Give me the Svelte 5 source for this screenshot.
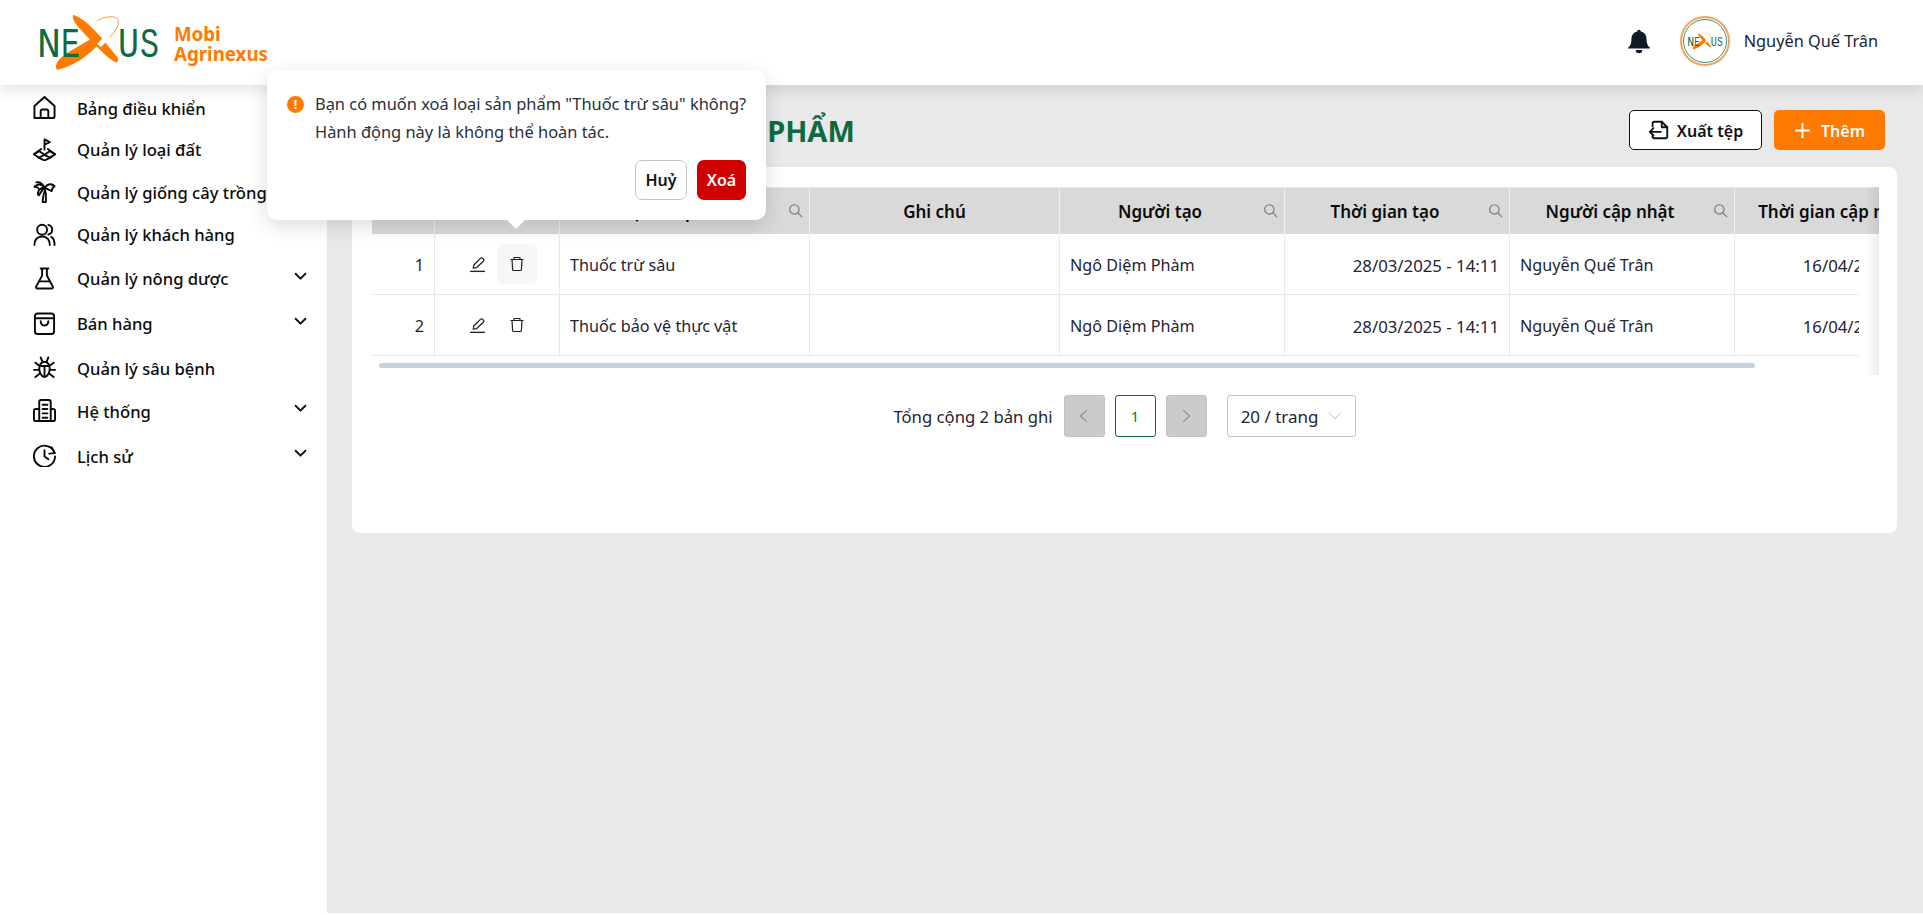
<script>
  const menu = [
    { label: 'Bảng điều khiển', icon: 'home' },
    { label: 'Quản lý loại đất', icon: 'land' },
    { label: 'Quản lý giống cây trồng', icon: 'palm' },
    { label: 'Quản lý khách hàng', icon: 'users' },
    { label: 'Quản lý nông dược', icon: 'flask', more: true },
    { label: 'Bán hàng', icon: 'bag', more: true },
    { label: 'Quản lý sâu bệnh', icon: 'bug' },
    { label: 'Hệ thống', icon: 'building', more: true },
    { label: 'Lịch sử', icon: 'clock', more: true }
  ];
  const cols = [
    { t: '', w: 63 },
    { t: '', w: 125 },
    { t: 'Loại sản phẩm', w: 250, s: true },
    { t: 'Ghi chú', w: 250 },
    { t: 'Người tạo', w: 225, s: true },
    { t: 'Thời gian tạo', w: 225, s: true },
    { t: 'Người cập nhật', w: 225, s: true },
    { t: 'Thời gian cập nhật', w: 225, s: true }
  ];
  const rows = [
    { n: 1, name: 'Thuốc trừ sâu' },
    { n: 2, name: 'Thuốc bảo vệ thực vật' }
  ];
</script>

{#snippet glass()}
  <svg class="glass" viewBox="0 0 16 16" fill="none" stroke="#777" stroke-width="1.2"><circle cx="6.8" cy="6.8" r="5"/><path d="M10.5 10.5 15 15"/></svg>
{/snippet}

{#snippet menuIcon(name)}
  <svg class="micon" viewBox="0 0 24 24" fill="none" stroke="#0b0b0b" stroke-width="2" stroke-linecap="round" stroke-linejoin="round">
    {#if name === 'home'}
      <path d="M1.500 23V10.500L12 1l10.500 9.500V21a2 2 0 0 1-2 2H1.500z"/><path d="M8 23v-7a2 2 0 0 1 2-2h4a2 2 0 0 1 2 2v7"/>
    {:else if name === 'land'}
      <path d="M12 12V1.500l5.500 2.800L12 7"/><path d="M8.500 11.500 1 17l5 3.500 6 3 6-3 5-3.500-7.500-5.500"/><path d="M7 14l5 3.500 5-3.500M6 20.500l6-3 6 3"/><path d="M1 17l5-3M23 17l-5-3"/>
    {:else if name === 'palm'}
      <path d="M12 8C9 4 5 3.500 1.500 7c2 0 3 .5 4 1.500"/><path d="M12 8c3-4 7.500-5 10.500-1.500-1.500.5-2.500 2-3 5L12 8z"/><path d="M11.500 8C8 8 5.500 10 5 14c0 .8.5 1.500 1 2l5.500-8z"/><path d="M12 8c1.500 4.500 2 9 1.500 15h-3.500c.5-3.500.5-7 2-11"/><path d="M12 8C10 4 7 2 3.500 2.500"/>
    {:else if name === 'users'}
      <circle cx="9.500" cy="7" r="5.200"/><path d="M1.500 23c0-5.500 3-9 8-9s8 3.500 8 9"/><path d="M16 2c2.500.5 4 2.500 4 5s-1.500 4.300-4 5M19 14.500c2.200 1.200 3.500 4 3.500 8.500"/>
    {:else if name === 'flask'}
      <path d="M8 1.500h8M9.500 1.500v7.500L3.500 20a1.500 1.500 0 0 0 1.300 2.500h14.400a1.500 1.500 0 0 0 1.300-2.500L14.500 9V1.500"/><path d="M6.500 15h11"/>
    {:else if name === 'bag'}
      <rect x="2" y="1.500" width="20" height="21.500" rx="3"/><path d="M2 6.500h20"/><path d="M8 9.500c0 6 8 6 8 0"/>
    {:else if name === 'bug'}
      <path d="M6.500 13c0-4 2.500-7 5.500-7s5.500 3 5.500 7-2.500 9-5.500 9-5.500-5-5.500-9zM7 10.500h10M12 10.500V22"/><path d="M8 1.500l2 5M16 1.500l-2 5M2.500 7 7 10.500M21.500 7 17 10.500M1 14.500h5.500M23 14.500h-5.500M2.500 22l5-4M21.500 22l-5-4"/>
    {:else if name === 'building'}
      <path d="M6.500 23V3a2 2 0 0 1 2-2h8a2 2 0 0 1 2 2v20"/><path d="M6.500 10.500H3a2 2 0 0 0-2 2V21a2 2 0 0 0 2 2h18a2 2 0 0 0 2-2v-8.500a2 2 0 0 0-2-2h-2.500"/><path d="M10 6h5M10 10.500h5M10 15h5M10 19.500h5"/>
    {:else}
      <path d="M22.500 9.500A11 11 0 1 0 23 13"/><path d="M19.500 3.500 22.700 9.500 17 10"/><path d="M12 6.500V13l4 3"/>
    {/if}
  </svg>
{/snippet}

{#snippet logoMark(w, h)}
  <svg class="mark" width={w} height={h} viewBox="36 14 124 58">
    <path d="M57 70C53 64 60 57 72 50L96 36 102 41C92 52 76 66 57 70Z" fill="#ff7a00"/>
    <path d="M73 15C80 16 90 25 100 36L118 58C119 61 117 63 115 62 107 58 92 42 83 32 77 26 72 20 73 15Z" fill="#ff7a00"/>
    <path d="M97 21C104 16 116 15 118 20 120 26 114 34 106 40" fill="none" stroke="#ff9a3d" stroke-width="1"/>
    <path d="M97 44l9-9 4 3-9 9z" fill="#fff"/>
    <text x="37" y="57" class="logo-t" textLength="24" lengthAdjust="spacingAndGlyphs">N</text>
    <text x="61" y="57" class="logo-t" textLength="19" lengthAdjust="spacingAndGlyphs">E</text>
    <text x="118" y="57" class="logo-t" textLength="21" lengthAdjust="spacingAndGlyphs">U</text>
    <text x="140" y="57" class="logo-t" textLength="19" lengthAdjust="spacingAndGlyphs">S</text>
  </svg>
{/snippet}

<div class="page">
  <header class="top">
    <div class="brand">
      {@render logoMark(124, 58)}
      <div class="brand-name">Mobi<br />Agrinexus</div>
    </div>
    <div class="user">
      <svg class="bell" viewBox="0 0 24 24" fill="#111827"><path d="M12 1.500c-1 0-1.700.8-1.700 1.800C6.800 4.100 5 7 5 10.500c0 3.500-1 6-3 7.500v1h20v-1c-2-1.500-3-4-3-7.500 0-3.500-1.800-6.400-5.300-7.200 0-1-.7-1.800-1.700-1.800zM9 20.200a3 3 0 0 0 6 0z"/></svg>
      <div class="avatar">
        <div class="avatar-in">{@render logoMark(36, 17)}</div>
      </div>
      <span class="uname">Nguyễn Quế Trân</span>
    </div>
  </header>

  <div class="body">
    <nav class="side">
      {#each menu as m}
        <div class="item" class:more={m.more}>
          {@render menuIcon(m.icon)}
          <span class="lbl">{m.label}</span>
          {#if m.more}
            <svg class="chev" viewBox="0 0 12 12" fill="none" stroke="#111" stroke-width="1.8" stroke-linecap="round" stroke-linejoin="round"><path d="M1.500 3.500 6 8l4.500-4.500"/></svg>
          {/if}
        </div>
      {/each}
    </nav>

    <main class="main">
      <div class="title-row">
        <h1>DANH SÁCH CÁC LOẠI SẢN PHẨM</h1>
        <div class="actions">
          <button class="btn-out">
            <svg viewBox="0 0 24 24" width="22" height="22" fill="none" stroke="#111" stroke-width="2" stroke-linecap="round" stroke-linejoin="round"><path d="M5 8V5a2 2 0 0 1 2-2h8l6 6v10a2 2 0 0 1-2 2H7a2 2 0 0 1-2-2v-1"/><path d="M15 3v6h6"/><path d="M14 14H2M6 10l-4 4 4 4"/></svg>
            <span class="bt">Xuất tệp</span>
          </button>
          <button class="btn-add">
            <svg viewBox="0 0 16 16" width="17" height="17" fill="none" stroke="#fff" stroke-width="1.800"><path d="M8 1v14M1 8h14"/></svg>
            <span class="bt">Thêm</span>
          </button>
        </div>
      </div>

      <section class="card">
        <div class="table-clip">
          <table>
            <colgroup>
              {#each cols as c}<col style="width:{c.w}px" />{/each}
            </colgroup>
            <thead>
              <tr>
                {#each cols as c}
                  <th class:searchable={c.s}>
                    <span>{c.t}</span>
                    {#if c.s}{@render glass()}{/if}
                  </th>
                {/each}
              </tr>
            </thead>
            <tbody>
              {#each rows as r, i}
                <tr>
                  <td class="num">{r.n}</td>
                  <td class="act">
                    <div class="act-in">
                      <span class="ib">
                        <svg viewBox="0 0 18 18" width="19" height="19" fill="none" stroke="#222" stroke-width="1.200" stroke-linejoin="round"><path d="M5 12.500 5.500 9.500 12 3a1.200 1.200 0 0 1 1.700 0l1 1a1.200 1.200 0 0 1 0 1.700L8 12z"/><path d="M2 15.500h14" stroke-width="1.300"/></svg>
                      </span>
                      <span class="ib" class:hov={i === 0}>
                        <svg viewBox="0 0 18 18" width="18" height="18" fill="none" stroke="#222" stroke-width="1.200" stroke-linejoin="round"><path d="M2.500 4.500h13M6 4.500V2.500h6v2M4 4.500l.6 10a1 1 0 0 0 1 1h6.800a1 1 0 0 0 1-1l.6-10"/></svg>
                      </span>
                    </div>
                  </td>
                  <td>{r.name}</td>
                  <td></td>
                  <td>Ngô Diệm Phàm</td>
                  <td class="date">28/03/2025 - 14:11</td>
                  <td>Nguyễn Quế Trân</td>
                  <td class="date">16/04/2025 - 10:30</td>
                </tr>
              {/each}
            </tbody>
          </table>
          <div class="scrollbar"></div>
          <div class="edge-white"></div>
          <div class="edge"></div>
        </div>

        <div class="pager">
          <span class="total">Tổng cộng 2 bản ghi</span>
          <span class="pg dis"><svg viewBox="0 0 12 12" width="14" height="14" fill="none" stroke="#8f8f8f" stroke-width="1"><path d="M8.500 1 3 6l5.500 5"/></svg></span>
          <span class="pg cur">1</span>
          <span class="pg dis"><svg viewBox="0 0 12 12" width="14" height="14" fill="none" stroke="#8f8f8f" stroke-width="1"><path d="M3.500 1 9 6l-5.500 5"/></svg></span>
          <span class="sel">20 / trang
            <svg viewBox="0 0 14 10" width="14" height="10" fill="none" stroke="#bbb" stroke-width="1"><path d="M1 1.500 7 8l6-6.500"/></svg>
          </span>
        </div>
      </section>
    </main>
  </div>

  <div class="pop">
    <div class="pop-msg">
      <span class="warn">!</span>
      <p>Bạn có muốn xoá loại sản phẩm "Thuốc trừ sâu" không?<br />Hành động này là không thể hoàn tác.</p>
    </div>
    <div class="pop-btns">
      <button class="cancel">Huỷ</button>
      <button class="del">Xoá</button>
    </div>
    <span class="arrow"></span>
  </div>
</div>

<style>
  :global(body) { margin: 0; background: #fff; }
  .page {
    position: relative;
    width: 1923px;
    height: 915px;
    padding-bottom: 2px;
    box-sizing: border-box;
    overflow: hidden;
    font-family: "Noto Sans", sans-serif;
    font-size: 16px;
    color: #1f2430;
    display: flex;
    flex-direction: column;
  }
  .top {
    height: 85px;
    flex: none;
    background: #fff;
    display: flex;
    align-items: center;
    justify-content: space-between;
    padding: 0 45px 0 36px;
    box-shadow: 0 4px 14px rgba(0, 0, 0, .12);
    position: relative;
    z-index: 2;
  }
  .brand { display: flex; align-items: center; gap: 14px; }
  .mark { overflow: visible; }
  .logo-t {
    font-family: "Liberation Mono", monospace;
    font-size: 42px;
    fill: #0d6b3f;
  }
  .brand-name {
    color: #ff7a00;
    font-weight: 700;
    font-size: 18.700px;
    line-height: 20px;
    padding-top: 2px;
  }
  .user { display: flex; align-items: center; padding-bottom: 3px; }
  .bell { width: 26px; height: 26px; margin-right: 28px; }
  .avatar {
    width: 50px; height: 50px;
    border-radius: 50%;
    border: 2px solid #f0a35e;
    box-sizing: border-box;
    display: flex; align-items: center; justify-content: center;
    margin-right: 14px;
  }
  .avatar-in {
    width: 44px; height: 44px;
    border: 1.500px solid #3f9169;
    border-radius: 50%;
    box-sizing: border-box;
    display: flex; align-items: center; justify-content: center;
  }
  .uname { color: #1a2233; font-size: 16.300px; }
  .body { flex: 1; display: flex; min-height: 0; }
  .side {
    width: 327px;
    flex: none;
    background: #fff;
    box-sizing: border-box;
    padding: 2px 0 0 33px;
    display: flex;
    flex-direction: column;
  }
  .item {
    height: 42.500px;
    box-sizing: border-box;
    display: flex;
    align-items: center;
    color: #0b0b0b;
    font-weight: 500;
    font-size: 16.600px;
    position: relative;
    white-space: nowrap;
  }
  .item:first-child { height: 41px; }
  .item:nth-child(7) { padding-top: 2px; }
  .item.more { height: 45px; }
  .lbl { padding-top: 1px; }
  .micon { width: 23px; height: 23px; flex: none; margin-right: 21px; }
  .chev { width: 13px; height: 13px; position: absolute; left: 261px; top: 14px; }
  .main {
    flex: 1;
    background: #e9e9e9;
    padding: 25px 26px 0 25px;
    box-sizing: border-box;
    min-width: 0;
  }
  .title-row {
    display: flex;
    align-items: center;
    justify-content: space-between;
    height: 40px;
    padding-right: 12px;
    margin-bottom: 17px;
  }
  h1 {
    margin: 0 0 0 29px;
    color: #0d6b3f;
    font-size: 29px;
    font-weight: 700;
  }
  .actions { display: flex; gap: 12px; }
  button { font-family: inherit; cursor: pointer; }
  .btn-out, .btn-add {
    height: 40px;
    border-radius: 5px;
    display: flex; align-items: center; justify-content: center;
    font-size: 16px;
    font-weight: 600;
    gap: 7px;
  }
  .bt { padding-top: 2px; }
  .btn-out { width: 133px; background: #fff; border: 1px solid #111; color: #111; }
  .btn-add { width: 111px; background: #ff7a00; border: 0; color: #fff; gap: 10px; padding-left: 6px; }
  .card {
    background: #fff;
    border-radius: 8px;
    height: 366px;
    padding: 20px 20px 0 20px;
    box-sizing: border-box;
  }
  .table-clip {
    position: relative;
    overflow: hidden;
    height: 188px;
    width: 1507px;
  }
  table {
    border-collapse: separate;
    border-spacing: 0;
    table-layout: fixed;
    width: 1588px;
  }
  th {
    height: 47px;
    background: #d9d9d9;
    border-right: 1px solid #efefef;
    font-weight: 600;
    font-size: 17px;
    color: #0b0b0b;
    position: relative;
    padding: 1px 0 0;
    box-sizing: border-box;
    text-align: center;
    white-space: nowrap;
    overflow: hidden;
    border-top: 1px solid #e5e5e5;
  }
  th.searchable { padding-right: 24px; }
  .glass { position: absolute; right: 6px; top: 15px; width: 15px; height: 15px; }
  td {
    height: 61px;
    box-sizing: border-box;
    border-bottom: 1px solid #e8e8e8;
    border-right: 1px solid #e8e8e8;
    padding: 2px 10px 0;
    font-size: 16.200px;
    color: #1f2430;
    white-space: nowrap;
    overflow: hidden;
  }
  .num, .date { text-align: right; }
  .date { font-size: 16.800px; }
  .act { padding: 0; }
  .act-in { display: flex; justify-content: center; }
  .ib {
    width: 40px; height: 40px;
    display: flex; align-items: center; justify-content: center;
    border-radius: 6px;
  }
  .hov { background: #f7f7f7; }
  .scrollbar {
    position: absolute;
    left: 7px; top: 176px;
    width: 1376px; height: 5px;
    background: #c5d2e0;
    border-radius: 3px;
  }
  .edge-white {
    position: absolute;
    right: 0; top: 47px; bottom: 0;
    width: 20px;
    background: #fff;
  }
  .edge {
    position: absolute;
    right: 0; top: 0; bottom: 0;
    width: 14px;
    background: linear-gradient(to right, rgba(0,0,0,0), rgba(0,0,0,.07));
  }
  .pager {
    display: flex;
    align-items: center;
    justify-content: center;
    margin-top: 20px;
    height: 42px;
  }
  .total { margin-right: 11px; font-size: 16.700px; }
  .pg {
    width: 41px; height: 42px;
    box-sizing: border-box;
    border-radius: 3px;
    display: flex; align-items: center; justify-content: center;
    margin-right: 10px;
    font-size: 14px;
  }
  .dis { background: #cbcbcb; border: 1px solid #c0c0c0; }
  .cur { border: 1px solid #0d6b3f; color: #0d6b3f; }
  .sel {
    margin-left: 10px;
    width: 129px; height: 42px;
    box-sizing: border-box;
    border: 1px solid #c4c4c4;
    border-radius: 3px;
    display: flex; align-items: center; justify-content: center;
    gap: 9px;
    font-size: 17px;
  }
  .pop {
    position: absolute;
    left: 267px; top: 70px;
    width: 499px; height: 150px;
    box-sizing: border-box;
    background: #fff;
    border-radius: 10px;
    padding: 20px;
    box-shadow: 0 6px 20px rgba(0,0,0,.14);
    z-index: 5;
  }
  .pop-msg { display: flex; }
  .warn {
    width: 17px; height: 17px;
    flex: none;
    border-radius: 50%;
    background: #ff7a00;
    color: #fff;
    font-size: 12px;
    font-weight: 700;
    display: flex; align-items: center; justify-content: center;
    margin: 6px 11px 0 0;
  }
  .pop-msg p { margin: 0; line-height: 28px; white-space: nowrap; color: #2a2f3a; font-size: 16.420px; }
  .pop-btns { display: flex; justify-content: flex-end; gap: 10px; margin-top: 14px; }
  .cancel, .del {
    height: 40px;
    border-radius: 7px;
    font-size: 16px;
    font-weight: 600;
    padding: 0;
  }
  .cancel { width: 52px; background: #fff; border: 1px solid #c4c4c4; color: #111; }
  .del { width: 49px; background: #d00000; border: 0; color: #fff; }
  .arrow {
    position: absolute;
    left: 240px;
    bottom: -9px;
    width: 0; height: 0;
    border-left: 9px solid transparent;
    border-right: 9px solid transparent;
    border-top: 9px solid #fff;
  }
</style>
